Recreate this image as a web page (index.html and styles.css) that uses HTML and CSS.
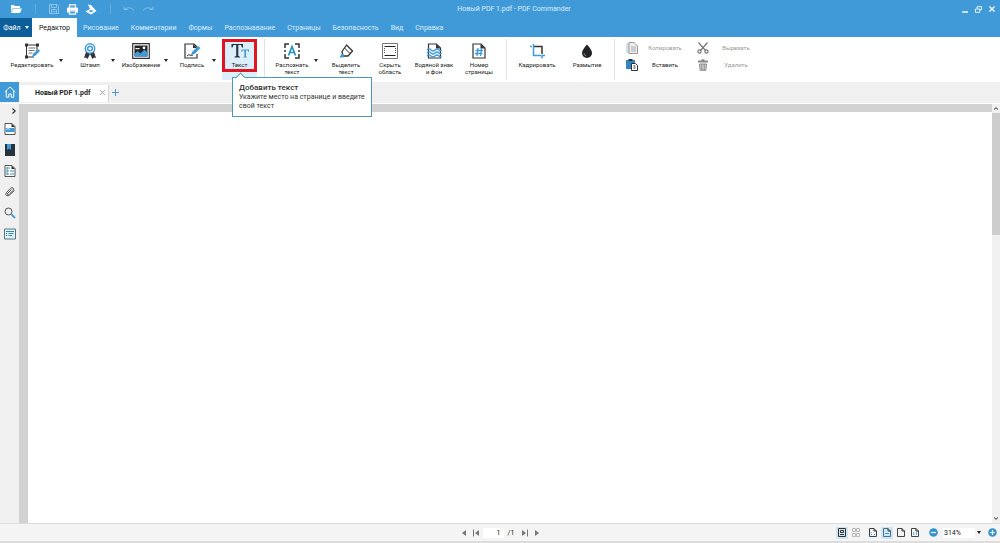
FILE: index.html
```html
<!DOCTYPE html>
<html lang="ru">
<head>
<meta charset="utf-8">
<title>Новый PDF 1.pdf - PDF Commander</title>
<link rel="stylesheet" href="styles.css">
</head>
<body>
<div class="app">
  <header class="titlebar">
    <div class="quick">
      <button class="icon-btn q-open" aria-label="Открыть"><svg width="12" height="10" viewBox="0 0 12 10"><path d="M1 8V1h3l1 1h5v2H3L1 8z" fill="#fff"/><path d="M3.3 4.5H12L10 9H1z" fill="#fff"/></svg></button>
      <span class="q-sep"></span>
      <button class="icon-btn q-save" aria-label="Сохранить"><svg width="10" height="10" viewBox="0 0 10 10" fill="none" stroke="#8cc2e8"><path d="M.5.5h7.5L9.500 2v7.500h-9zM2.500.5v3h5v-3M2.500 9.500v-4h5v4M3.500 7.500h3"/></svg></button>
      <button class="icon-btn q-print" aria-label="Печать"><svg width="11" height="11" viewBox="0 0 11 11"><path d="M2.500 4V.8h6V4M2.500 7v3.200h6V7z" fill="none" stroke="#fff" stroke-width="1.200"/><path d="M0 4.200Q0 3.500 1 3.500h9q1 0 1 .8V8.500H9V6.500H2v2H0z" fill="#fff"/></svg></button>
      <button class="icon-btn q-scan" aria-label="Сканировать"><svg width="12" height="11" viewBox="0 0 12 11"><path d="M3 .5L6 1l4 4.500L11.500 7 6 10.500.5 7.500 5 5z" fill="#fff"/><path d="M3.500 7l2.500 1.300L8.500 7l-2-1z" fill="#409ad8"/></svg></button>
      <span class="q-sep"></span>
      <button class="icon-btn q-undo" aria-label="Отменить"><svg width="12" height="6" viewBox="0 0 12 6" fill="none" stroke="#85bde5"><path d="M1 .5v3h3.500M1 3.500Q7-.5 11 4.500"/></svg></button>
      <button class="icon-btn q-redo" aria-label="Повторить"><svg width="12" height="6" viewBox="0 0 12 6" fill="none" stroke="#85bde5"><path d="M11 .5v3H7.500M11 3.500Q5-.5 1 4.500"/></svg></button>
    </div>
    <div class="title">Новый PDF 1.pdf - PDF Commander</div>
    <div class="window-controls">
      <button class="icon-btn" aria-label="Свернуть"><svg width="6" height="7" viewBox="0 0 6 7"><path d="M0 6h6" stroke="#fff" stroke-width="1.400"/></svg></button>
      <button class="icon-btn" aria-label="Восстановить"><svg width="7" height="7" viewBox="0 0 7 7" fill="none" stroke="#e5f2fb"><path d="M2 2.500V.7h4.500v3H5M.5 3h4.200v3.400H.5z"/></svg></button>
      <button class="icon-btn" aria-label="Закрыть"><svg width="6" height="6" viewBox="0 0 6 6"><path d="M.5.5l5 5m0-5l-5 5" stroke="#fff" stroke-width="1.300"/></svg></button>
    </div>
  </header>
  <nav class="menu">
    <button class="file">Файл <span class="caret"></span></button>
    <button class="tab active">Редактор</button>
    <button class="tab">Рисование</button>
    <button class="tab">Комментарии</button>
    <button class="tab">Формы</button>
    <button class="tab">Распознавание</button>
    <button class="tab">Страницы</button>
    <button class="tab">Безопасность</button>
    <button class="tab">Вид</button>
    <button class="tab">Справка</button>
  </nav>
  <section class="ribbon">
    <button class="tool t-edit"><svg width="16" height="16" viewBox="0 0 16 16"><path d="M2.500 1v14M13 1v8M1 2h14M1 14h9" fill="none" stroke="#333"/><path d="M1 .5h3v3H1zM12 .5h3v3h-3zM1 12.500h3v3H1z" fill="#333"/><path d="M4.500 5h7M4.500 7.500h6M4.500 10h4" stroke="#777"/><path d="M8 14l1-3 5-5 2 2-5 5z" fill="#409ad8"/></svg><span>Редактировать</span></button>
    <button class="drop" aria-label="Ещё"><span class="caret"></span></button>
    <button class="tool t-stamp"><svg width="16" height="16" viewBox="0 0 16 16"><path d="M4 9l-2 6 2-.5L5.500 16 8 11l2.500 5 1.500-1.500 2 .5-2-6z" fill="#333"/><circle cx="8" cy="5.500" r="4.700" fill="#fff" stroke="#409ad8" stroke-width="1.500"/><circle cx="8" cy="5.500" r="2.300" fill="#fff" stroke="#409ad8" stroke-width="1.500"/></svg><span>Штамп</span></button>
    <button class="drop" aria-label="Ещё"><span class="caret"></span></button>
    <button class="tool t-image"><svg width="18" height="16" viewBox="0 0 18 16"><path d="M.7.7h16.600v14.600H.7z" fill="#fff" stroke="#333" stroke-width="1.200"/><path d="M2.500 2.500h13v11h-13z" fill="#222"/><path d="M2.500 11l3-3 3 2.500 4-4 3 3v4h-13z" fill="#409ad8"/><path d="M3.500 5h4v1.200h-4z" fill="#fff"/><circle cx="12" cy="4.800" r="1.400" fill="#fff"/></svg><span>Изображение</span></button>
    <button class="drop" aria-label="Ещё"><span class="caret"></span></button>
    <button class="tool t-sign"><svg width="17" height="16" viewBox="0 0 17 16"><path d="M13 11v4H1V1h9l3 3" fill="none" stroke="#333" stroke-width="1.200"/><path d="M9 1v4h4z" fill="#333"/><path d="M3 13q2-2 3-1t3 0" fill="none" stroke="#333"/><path d="M7 12l1-3 6-6 2.500 2-6 6z" fill="#409ad8"/></svg><span>Подпись</span></button>
    <button class="drop" aria-label="Ещё"><span class="caret"></span></button>
    <div class="text-slot">
      <button class="tool t-text"><svg width="18" height="16" viewBox="0 0 18 16"><path d="M.5 1h11.500v3.500h-1L10 2H7.300v11l1.700.7v.8H3.500v-.8l1.700-.7V2H2.500l-1 2.500h-1z" fill="#26333d"/><path d="M10.500 6.500H18V9h-.7L17 7.500h-2v6l1 .4v.6h-3.600v-.6l1-.4v-6h-1.900L11.200 9h-.7z" fill="#409ad8"/></svg><span>Текст</span></button>
      <div class="tooltip" role="tooltip"><strong>Добавить текст</strong><p>Укажите место на странице и введите свой текст</p></div>
    </div>
    <span class="rule"></span>
    <button class="tool t-ocr"><svg width="16" height="16" viewBox="0 0 16 16" fill="none"><path d="M1 5V1h4M11 1h4v4M1 11v4h4M11 15h4v-4M1 7v2M15 7v2" stroke="#333" stroke-width="1.500"/><path d="M4.500 12.500l3.500-9 3.500 9M5.700 9.500h4.600" stroke="#2794bd" stroke-width="1.700"/></svg><span>Распознать<br>текст</span></button>
    <button class="drop" aria-label="Ещё"><span class="caret"></span></button>
    <button class="tool t-mark"><svg width="16" height="16" viewBox="0 0 16 16"><path d="M4 8.500L8.500 2 14.500 8 10 13H5z" fill="#fff" stroke="#333" stroke-width="1.300" stroke-linejoin="round"/><path d="M6.500 5l5.500 5.500" stroke="#333"/><path d="M4 10l-2.500 4.500H5l1-2z" fill="#409ad8"/></svg><span>Выделить<br>текст</span></button>
    <button class="tool t-hide"><svg width="16" height="16" viewBox="0 0 16 16" fill="none"><path d="M.5.5h15v15H.5z" stroke="#777"/><path d="M2.500 3.500h11M2.500 12.500h11" stroke="#222"/><path d="M2.500 5v6M13.500 5v6" stroke="#555" stroke-dasharray="1 1"/></svg><span>Скрыть<br>область</span></button>
    <button class="tool t-water"><svg width="16" height="16" viewBox="0 0 16 16" fill="none"><path d="M2.500 1h8l4 4v10h-12z" stroke="#333" stroke-width="1.200"/><path d="M10 1v4.500h4.500z" fill="#333"/><path d="M1 7q2-2 4 0t4 0 4 0 2 0M1 10q2-2 4 0t4 0 4 0 2 0M1 13q2-2 4 0t4 0 4 0 2 0" stroke="#409ad8" stroke-width="1.200"/></svg><span>Водяной знак<br>и фон</span></button>
    <button class="tool t-number"><svg width="16" height="16" viewBox="0 0 16 16" fill="none"><path d="M2 1h8l4 4v10H2z" stroke="#333" stroke-width="1.200"/><path d="M9.500 1v4.500H14z" fill="#333"/><path d="M7 5l-1 8M10.500 5l-1 8M4.500 7.500h7.500M4 10.500h7.500" stroke="#409ad8" stroke-width="1.300"/></svg><span>Номер<br>страницы</span></button>
    <span class="rule r-mid"></span>
    <button class="tool t-crop"><svg width="16" height="16" viewBox="0 0 16 16" fill="none"><path d="M4.500 3.500h8.500V11" stroke="#333" stroke-width="1.500"/><path d="M4.500 1v11.500H12M1 3.500h2M13 12.500h3M13 12v3.500" stroke="#409ad8" stroke-width="1.500"/></svg><span>Кадрировать</span></button>
    <button class="tool t-blur"><svg width="16" height="16" viewBox="0 0 16 16"><path d="M8 1.500q5 5.500 5 8.500a5 5 0 0 1-10 0q0-3 5-8.500z" fill="#202426"/><path d="M5 10q0 2.500 2.500 3" fill="none" stroke="#777"/></svg><span>Размытие</span></button>
    <span class="rule r-end"></span>
    <div class="clip">
      <button class="clip-btn" disabled><svg width="12" height="12" viewBox="0 0 12 12"><path d="M0 1h7v10H0z" fill="#cfe3e9"/><path d="M3 .5h5L11.500 4v7.500H3z" fill="#eee" stroke="#999"/><path d="M5 5h5M5 7h5M5 9h5" stroke="#aaa"/></svg><span>Копировать</span></button>
      <button class="clip-btn" disabled><svg width="12" height="12" viewBox="0 0 12 12" fill="none" stroke="#777" stroke-width="1.200"><path d="M1.500.5l7 8M10.500.5l-7 8"/><circle cx="2.500" cy="9.500" r="1.600"/><circle cx="9.500" cy="9.500" r="1.600"/></svg><span>Вырезать</span></button>
      <button class="clip-btn"><svg width="12" height="12" viewBox="0 0 12 12"><path d="M0 1h9v9H0z" fill="#3184bf"/><path d="M2.500 0h4v2h-4z" fill="#333"/><path d="M5.500 4.500h4l2 2v5h-6z" fill="#fff" stroke="#333"/><path d="M7.500 7h2M7.500 9h2" stroke="#333"/></svg><span>Вставить</span></button>
      <button class="clip-btn" disabled><svg width="12" height="12" viewBox="0 0 12 12"><path d="M1 1.500h10v2H1zM4.500.3h3v1.500h-3z" fill="#888"/><path d="M2.500 5h7l-.7 6.300H3.200z" fill="#ddd" stroke="#888"/><path d="M4.500 5v6M6 5v6M7.500 5v6" stroke="#888" stroke-width=".7"/></svg><span>Удалить</span></button>
    </div>
  </section>
  <div class="doc-tabs">
    <button class="home" aria-label="Главная"><svg width="12" height="12" viewBox="0 0 12 12" fill="none" stroke="#fff"><path d="M.8 6L6 1l5.200 5M2.300 5v6.200h2.500V8h2.400v3.200h2.500V5"/></svg></button>
    <div class="doc-tab"><span>Новый PDF 1.pdf</span><button class="icon-btn" aria-label="Закрыть вкладку"><svg width="5" height="5" viewBox="0 0 5 5"><path d="M0 0l5 5m0-5L0 5" stroke="#999" stroke-width=".8"/></svg></button></div>
    <button class="icon-btn add" aria-label="Новая вкладка"><svg width="7" height="7" viewBox="0 0 7 7"><path d="M3.500 0v7M0 3.500h7" stroke="#409ad8"/></svg></button>
  </div>
  <main class="workspace">
    <aside class="rail">
      <button class="icon-btn expand" aria-label="Развернуть"><svg width="4" height="6" viewBox="0 0 4 6"><path d="M.5.5L3.200 3 .5 5.500" fill="none" stroke="#333" stroke-width="1.200"/></svg></button>
      <button class="icon-btn" aria-label="Страницы"><svg width="12" height="12" viewBox="0 0 12 12"><path d="M1 .5h7l3 3v8H1z" fill="#fff" stroke="#555"/><path d="M7.500.5v3.500H11z" fill="#333"/><path d="M1.500 5h9v4h-9z" fill="#409ad8"/><path d="M2 6.500l2-1 2 1" fill="none" stroke="#cbe6f6"/></svg></button>
      <button class="icon-btn" aria-label="Закладки"><svg width="12" height="12" viewBox="0 0 12 12"><path d="M1 0h10v12H1z" fill="#26333d"/><path d="M3 0h4v6L5 4.500 3 6z" fill="#409ad8"/></svg></button>
      <button class="icon-btn" aria-label="Содержание"><svg width="12" height="12" viewBox="0 0 12 12"><path d="M1 .5h7l3 3v8H1z" fill="#fff" stroke="#555"/><path d="M7.500.5v3.500H11z" fill="#333"/><path d="M3 2v8M3 3h3M3 6h2M3 9h2M6 6h4M6 9h4" fill="none" stroke="#3c93b4"/></svg></button>
      <button class="icon-btn" aria-label="Вложения"><svg width="12" height="12" viewBox="0 0 12 12" fill="none" stroke="#555"><path d="M7.500 3.500l-4 4q-.5 1 .3 1.300.7.200 1.200-.3l4-4q1.200-1.500 0-2.500-1.300-1-2.500.3l-4 4.200q-1.500 1.800 0 3 1.500 1 3-.5L10.500 4.500"/></svg></button>
      <button class="icon-btn" aria-label="Поиск"><svg width="12" height="12" viewBox="0 0 12 12" fill="none"><circle cx="4.500" cy="4.500" r="3.500" stroke="#555"/><path d="M7.500 7.500L11 11" stroke="#409ad8" stroke-width="1.800"/></svg></button>
      <button class="icon-btn" aria-label="Поля"><svg width="12" height="12" viewBox="0 0 12 12"><path d="M.5 1h11v10H.5z" fill="#e2f1f5" stroke="#557985"/><path d="M2 3.500h8M4.500 5.500h5M4.500 7.500h3.500M2 5.500h1M2 7.500h1" stroke="#398ba8"/></svg></button>
    </aside>
    <div class="canvas"><div class="page"></div></div>
    <div class="scroll">
      <button class="icon-btn" aria-label="Вверх"><svg width="4" height="3" viewBox="0 0 4 3"><path d="M0 2.500L2 .7l2 1.800" fill="none" stroke="#333"/></svg></button>
      <div class="thumb"></div>
      <button class="icon-btn" aria-label="Вниз"><svg width="4" height="3" viewBox="0 0 4 3"><path d="M0 .5l2 1.800L4 .5" fill="none" stroke="#333"/></svg></button>
    </div>
  </main>
  <footer class="status">
    <div class="pager">
      <button class="icon-btn" aria-label="Назад"><svg width="10" height="8" viewBox="0 0 10 8"><path d="M7 1v6L3 4z" fill="#777"/></svg></button>
      <button class="icon-btn" aria-label="Первая"><svg width="10" height="8" viewBox="0 0 10 8"><path d="M8 1v6L4 4z" fill="#777"/><path d="M2.500 .5v7" stroke="#777"/></svg></button>
      <input class="page-no" aria-label="Страница" value="1"><span class="total">/1</span>
      <button class="icon-btn" aria-label="Последняя"><svg width="10" height="8" viewBox="0 0 10 8"><path d="M2 1v6l4-3z" fill="#777"/><path d="M7.500 .5v7" stroke="#777"/></svg></button>
      <button class="icon-btn" aria-label="Вперёд"><svg width="10" height="8" viewBox="0 0 10 8"><path d="M3 1v6l4-3z" fill="#777"/></svg></button>
    </div>
    <div class="view">
      <button class="icon-btn v on" aria-label="Одна страница"><svg width="8" height="9" viewBox="0 0 8 9" fill="none" stroke="#333"><path d="M.5.500h7v8h-7zM2.500 2.500h3v2h-3zM2 6.500h4"/></svg></button>
      <button class="icon-btn v" aria-label="Две страницы"><svg width="8" height="9" viewBox="0 0 8 9" fill="none" stroke="#bbb"><path d="M.500.500h3v3h-3zM4.500.500h3v3h-3zM.500 5.500h3v3h-3zM4.500 5.500h3v3h-3z"/></svg></button>
      <button class="icon-btn v v-fit" aria-label="По странице"><svg width="8" height="9" viewBox="0 0 8 9" fill="none"><path d="M5 .500H.500v8h7V3z" stroke="#444"/><path d="M5 .5V3h2.500" stroke="#333"/><path d="M2 5V4M2 6.500h1M5 6.500h1" stroke="#409ad8"/></svg></button>
      <button class="icon-btn v on" aria-label="По ширине"><svg width="8" height="9" viewBox="0 0 8 9" fill="none"><path d="M5 .500H.500v8h7V3z" stroke="#46718f"/><path d="M5 .5V3h2.500" stroke="#333"/><path d="M2 5.500h4" stroke="#409ad8"/></svg></button>
      <button class="icon-btn v" aria-label="По высоте"><svg width="8" height="9" viewBox="0 0 8 9" fill="none"><path d="M5 .500H.500v8h7V3z" stroke="#444"/><path d="M5 .5V3h2.500" stroke="#333"/></svg></button>
      <button class="icon-btn v" aria-label="Реальный размер"><svg width="8" height="9" viewBox="0 0 8 9" fill="none"><path d="M5 .500H.500v8h7V3z" stroke="#444"/><path d="M5 .5V3h2.500" stroke="#333"/><path d="M2.500 4v3M5.500 4v3M4 4.500v.7M4 6v.7" stroke="#5aa5d5" stroke-width=".8"/></svg></button>
      <button class="icon-btn v-minus" aria-label="Уменьшить"><svg width="9" height="9" viewBox="0 0 9 9"><circle cx="4.500" cy="4.500" r="4.300" fill="#3494cf"/><path d="M2 4.500h5" stroke="#fff" stroke-width="1.200"/></svg></button>
      <select class="zoom" aria-label="Масштаб"><option>314%</option></select><span class="caret zoom-caret"></span>
      <button class="icon-btn v-plus" aria-label="Увеличить"><svg width="9" height="9" viewBox="0 0 9 9"><circle cx="4.500" cy="4.500" r="4.300" fill="#3494cf"/><path d="M2 4.500h5M4.500 2v5" stroke="#fff" stroke-width="1.200"/></svg></button>
    </div>
  </footer>
</div>
</body>
</html>
```
FILE: styles.css
```css
* { box-sizing: border-box; }
body { margin: 0; font: 6px/8px Roboto, "Open Sans", sans-serif; color: #222; }
button, input, select { font: inherit; color: inherit; border: 0; padding: 0; margin: 0; background: none; }
svg { display: block; flex: none; }
.icon-btn { display: flex; align-items: center; justify-content: center; flex: none; }
.caret { display: inline-block; border: 2px solid transparent; border-top: 3px solid currentColor; border-bottom: 0; }

.app { display: flex; flex-direction: column; height: 100vh; background: #f0f0f0; }

.titlebar { display: grid; grid-template-columns: 1fr auto 1fr; align-items: center; height: 18px; background: #409ad8; color: #dceefa; flex: none; }
.quick { display: flex; align-items: center; padding-left: 10px; }
.q-sep { width: 1px; height: 10px; margin-left: 13px; background: #62ade0; }
.q-save { margin-left: 13px; }
.q-print { margin-left: 8px; }
.q-scan { margin-left: 7px; }
.q-undo { margin-left: 12px; }
.q-redo { margin-left: 7px; }
.title { padding-left: 28px; font-size: 7px; }
.window-controls { display: flex; justify-content: flex-end; align-items: center; gap: 7px; padding-right: 5px; }

.menu { display: flex; height: 19px; background: #409ad8; color: #dceefa; font-size: 7px; flex: none; }
.file { display: flex; align-items: center; justify-content: center; gap: 4px; width: 32px; background: #0b5e99; color: #fff; }
.tab { padding: 0 6px; }
.tab.active { padding: 0 7px; background: #fff; color: #111; }

.ribbon { display: flex; align-items: flex-start; height: 45px; padding: 2px 6px; background: #fff; flex: none; }
.tool { display: flex; flex-direction: column; align-items: center; gap: 2px; height: 41px; padding-top: 4px; line-height: 7px; text-align: center; white-space: nowrap; flex: none; }
.drop { width: 6px; height: 43px; flex: none; line-height: 1px; }
.t-edit { width: 52px; }
.t-stamp { width: 40px; margin-left: 6px; }
.t-image { width: 44px; margin-left: 3px; }
.t-sign { width: 38px; margin-left: 4px; }
.text-slot { position: relative; height: 41px; margin-left: 5px; background: #dceefa; }
.t-text { width: 35px; height: 33px; padding-top: 1px; border: 3px solid #df1522; }
.rule { width: 1px; height: 41px; margin-left: 7px; background: #e2e2e2; flex: none; }
.t-ocr { width: 42px; margin-left: 6px; }
.t-mark { width: 42px; margin-left: 6px; }
.t-hide { width: 38px; margin-left: 4px; }
.t-water { width: 46px; margin-left: 2px; }
.t-number { width: 38px; margin-left: 3px; }
.r-mid { margin-left: 8px; }
.t-crop { width: 48px; margin-left: 6px; }
.t-blur { width: 40px; margin-left: 6px; }
.clip { display: grid; grid-template-columns: 66px 66px; grid-auto-rows: 17px; column-gap: 5px; margin-left: 11px; }
.clip-btn { display: flex; align-items: center; }
.clip-btn span { flex: 1; text-align: center; }
.clip-btn:disabled { color: #999; }

.tooltip { position: absolute; z-index: 2; left: 10px; top: 38px; width: 140px; padding: 5px 6px; border: 1px solid #4c9bb5; background: #fff; color: #333; font-size: 7px; line-height: 9px; }
.tooltip::before { content: ""; position: absolute; left: 4px; top: -4px; width: 6px; height: 6px; border: 1px solid #4c9bb5; border-right: 0; border-bottom: 0; background: #fff; transform: rotate(45deg); }
.tooltip strong { display: block; font-size: 8px; font-weight: 500; }
.tooltip p { margin: 1px 0 0; }

.doc-tabs { display: flex; height: 22px; padding-bottom: 1px; border-bottom: 1px solid #fff; flex: none; }
.home { display: flex; align-items: center; justify-content: center; width: 19px; background: #409ad8; }
.doc-tab { display: flex; align-items: center; justify-content: space-between; width: 90px; margin-top: 3px; padding: 0 3px 2px 16px; background: #fff; border-right: 1px solid #d5d5d5; font-size: 7px; font-weight: 700; }
.add { margin-left: 3px; }

.workspace { display: flex; flex: 1; min-height: 0; border-bottom: 1px solid #ddd; }
.rail { display: flex; flex-direction: column; align-items: center; gap: 9px; width: 19px; padding-top: 4px; flex: none; }
.expand { align-self: flex-end; margin-right: 3px; }
.canvas { flex: 1; display: flex; padding: 8px 0 0 9px; background: #d2d2d2; }
.page { flex: 1; background: #fff; }
.scroll { display: flex; flex-direction: column; width: 8px; background: #f0f0f0; }
.scroll .icon-btn { height: 9px; }
.thumb { height: 122px; margin-bottom: auto; background: #cdcdcd; }

.status { display: grid; grid-template-columns: 1fr auto 1fr; align-items: center; height: 19px; border-bottom: 2px solid #ddd; background: #f4f4f4; font-size: 7px; flex: none; }
.pager { display: flex; grid-column: 2; align-items: center; gap: 2px; }
.page-no { width: 21px; height: 10px; padding-right: 3px; background: #fff; text-align: right; }
.total { width: 12px; padding-left: 2px; }
.view { display: flex; align-items: center; justify-content: flex-end; padding-right: 3px; }
.v { width: 12px; height: 12px; margin-left: 2px; }
.v.on { background: #cfe5f2; }
.v-fit { margin-left: 5px; }
.v-minus { margin-left: 8px; }
.zoom { width: 32px; height: 10px; margin-left: 5px; padding-left: 1px; appearance: none; background: #fff; }
.zoom-caret { margin: 0 7px 0 2px; }
```
